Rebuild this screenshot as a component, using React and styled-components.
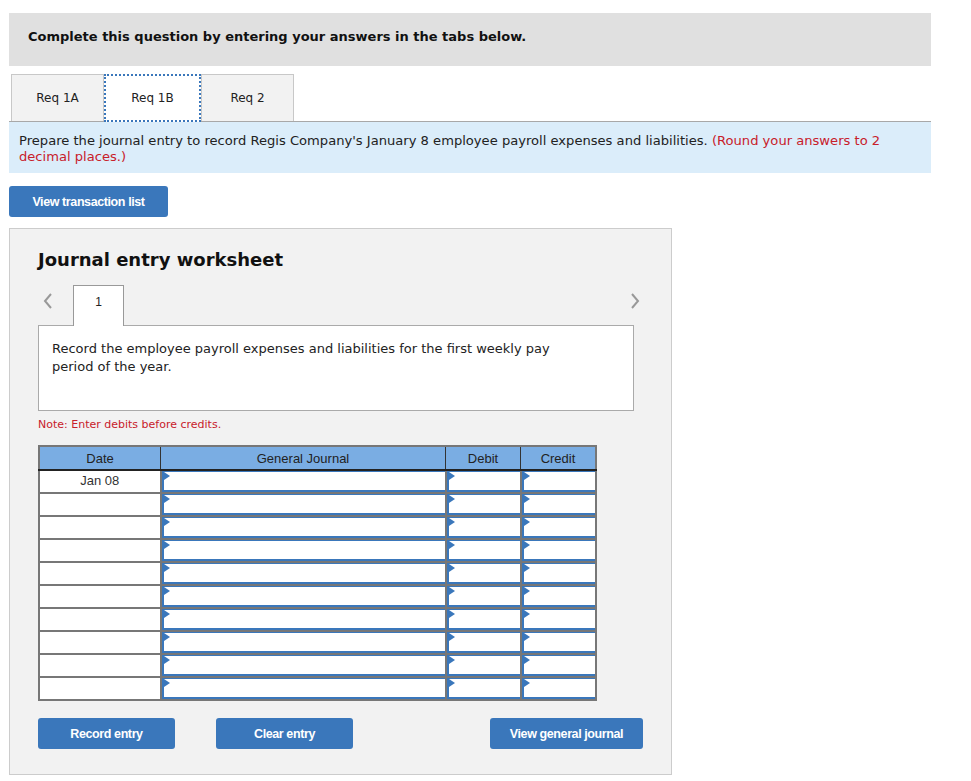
import styled, { createGlobalStyle } from "styled-components";

const GlobalStyle = createGlobalStyle`
  body {
    margin: 0;
    background: #fff;
    font-family: "DejaVu Sans", Verdana, sans-serif;
    color: #222;
  }
`;

const Page = styled.div`
  padding: 13px 0 0 9px;
  width: 922px;
`;

const Banner = styled.div`
  background: #e0e0e0;
  height: 53px;
  box-sizing: border-box;
  display: flex;
  align-items: center;
  padding: 0 0 6px 19px;
  font-size: 13px;
  font-weight: bold;
  color: #111;
`;

const TabRow = styled.div`
  display: flex;
  margin-top: 8px;
  padding-left: 2px;
  border-bottom: 1px solid #a8a8a8;
`;

const Tab = styled.div`
  width: ${(p) => p.$w}px;
  display: flex;
  align-items: center;
  justify-content: center;
  font-size: 12px;
  color: #222;
  box-sizing: border-box;
  background: ${(p) => (p.$active ? "#fff" : "#f2f2f2")};
  border: ${(p) => (p.$active ? "2px dotted #3a77bb" : "1px solid #c8c8c8")};
  border-bottom: ${(p) => (p.$active ? "2px dotted #3a77bb" : "none")};
  margin-bottom: ${(p) => (p.$active ? "-1px" : "0")};
  height: ${(p) => (p.$active ? "48px" : "47px")};
`;

const Instruction = styled.div`
  background: #dbedfa;
  height: 51px;
  box-sizing: border-box;
  padding: 11px 10px 0;
  font-size: 13.1px;
  line-height: 16px;
  color: #222;
`;

const Red = styled.span`
  color: #c8202a;
`;

const Button = styled.button`
  background: #3a77bb;
  color: #fff;
  border: none;
  border-radius: 3px;
  height: 31px;
  width: ${(p) => p.$w}px;
  font-family: "Liberation Sans", Arial, sans-serif;
  font-weight: bold;
  font-size: 12.5px;
  letter-spacing: -0.4px;
  cursor: pointer;
  padding: 0;
`;

const TopButton = styled(Button)`
  margin-top: 13px;
`;

const Panel = styled.div`
  margin-top: 11px;
  width: 663px;
  box-sizing: border-box;
  background: #f2f2f2;
  border: 1px solid #cccccc;
  padding: 20px 28px 25px;
`;

const Title = styled.h2`
  margin: 0;
  font-size: 18px;
  font-weight: bold;
  color: #111;
  line-height: 22px;
`;

const NavRow = styled.div`
  display: flex;
  align-items: flex-end;
  margin-top: 14px;
  width: 605px;
  height: 40px;
`;

const Chevron = styled.div`
  width: 35px;
  height: 32px;
  display: flex;
  align-items: center;
  justify-content: ${(p) => (p.$right ? "flex-end" : "flex-start")};
  padding: ${(p) => (p.$right ? "0 3px 0 0" : "0 0 0 5px")};
  box-sizing: border-box;
  margin-left: ${(p) => (p.$right ? "auto" : "0")};
  align-self: flex-start;
`;

const StepTab = styled.div`
  width: 51px;
  height: 41px;
  box-sizing: border-box;
  background: #fff;
  border: 1px solid #999;
  border-bottom: none;
  margin-bottom: -1px;
  position: relative;
  z-index: 1;
  display: flex;
  justify-content: center;
  padding-top: 9px;
  font-family: "Liberation Sans", Arial, sans-serif;
  font-size: 12px;
  color: #222;
`;

const Description = styled.div`
  width: 596px;
  height: 86px;
  box-sizing: border-box;
  background: #fff;
  border: 1px solid #aaaaaa;
  padding: 14px 13px;
  font-size: 13px;
  line-height: 18px;
  color: #222;
`;

const DescriptionText = styled.p`
  margin: 0;
  max-width: 510px;
`;

const Note = styled.div`
  margin-top: 7px;
  font-size: 11px;
  color: #c8202a;
`;

const Table = styled.table`
  margin-top: 14px;
  border-collapse: collapse;
  border: 2px solid #777;
  font-family: "Liberation Sans", Arial, sans-serif;
  font-size: 13px;
`;

const Th = styled.th`
  background: #7aade3;
  border: 1px solid #333;
  border-bottom: 2px solid #222;
  height: 22px;
  width: ${(p) => p.$w}px;
  font-weight: normal;
  color: #222;
  padding: 0;
`;

const Td = styled.td`
  border: 2px solid #777;
  height: 21px;
  padding: 0;
  text-align: center;
  color: #333;
  vertical-align: top;
  background: #fff;
`;

const InputTd = styled.td`
  border: 2px solid #777;
  padding: 0;
  height: 21px;
  background: #fff;
`;

const Field = styled.div`
  position: relative;
  height: 21px;
  box-sizing: border-box;
  border-style: solid;
  border-color: #3a77bb;
  border-width: 1px 0 2px 2px;
  background: #fff;
  &::before {
    content: "";
    position: absolute;
    left: 0;
    top: 0;
    border-left: 6px solid #3a77bb;
    border-top: 4px solid transparent;
    border-bottom: 4px solid transparent;
  }
`;

const DateText = styled.div`
  line-height: 20px;
`;

const ButtonRow = styled.div`
  display: flex;
  margin-top: 17px;
  width: 605px;
  gap: 41px;
  & > :last-child {
    margin-left: auto;
  }
`;

const ChevronIcon = ({ dir }) => (
  <svg width="10" height="16" viewBox="0 0 10 16">
    <path
      d={dir === "left" ? "M8 1 L2 8 L8 15" : "M2 1 L8 8 L2 15"}
      fill="none"
      stroke="#999"
      strokeWidth="2"
    />
  </svg>
);

const rows = Array.from({ length: 10 }, (_, i) => i);

export default function App() {
  return (
    <>
      <GlobalStyle />
      <Page>
        <Banner>Complete this question by entering your answers in the tabs below.</Banner>
        <TabRow>
          <Tab $w={93}>Req 1A</Tab>
          <Tab $w={97} $active>Req 1B</Tab>
          <Tab $w={93}>Req 2</Tab>
        </TabRow>
        <Instruction>
          Prepare the journal entry to record Regis Company's January 8 employee payroll expenses and liabilities.{" "}
          <Red>(Round your answers to 2 decimal places.)</Red>
        </Instruction>
        <TopButton $w={159}>View transaction list</TopButton>
        <Panel>
          <Title>Journal entry worksheet</Title>
          <NavRow>
            <Chevron>
              <ChevronIcon dir="left" />
            </Chevron>
            <StepTab>1</StepTab>
            <Chevron $right>
              <ChevronIcon dir="right" />
            </Chevron>
          </NavRow>
          <Description>
            <DescriptionText>
              Record the employee payroll expenses and liabilities for the first weekly pay period of the year.
            </DescriptionText>
          </Description>
          <Note>Note: Enter debits before credits.</Note>
          <Table>
            <thead>
              <tr>
                <Th $w={120}>Date</Th>
                <Th $w={284}>General Journal</Th>
                <Th $w={74}>Debit</Th>
                <Th $w={74}>Credit</Th>
              </tr>
            </thead>
            <tbody>
              {rows.map((i) => (
                <tr key={i}>
                  <Td>{i === 0 && <DateText>Jan 08</DateText>}</Td>
                  <InputTd>
                    <Field />
                  </InputTd>
                  <InputTd>
                    <Field />
                  </InputTd>
                  <InputTd>
                    <Field />
                  </InputTd>
                </tr>
              ))}
            </tbody>
          </Table>
          <ButtonRow>
            <Button $w={137}>Record entry</Button>
            <Button $w={137}>Clear entry</Button>
            <Button $w={153}>View general journal</Button>
          </ButtonRow>
        </Panel>
      </Page>
    </>
  );
}
